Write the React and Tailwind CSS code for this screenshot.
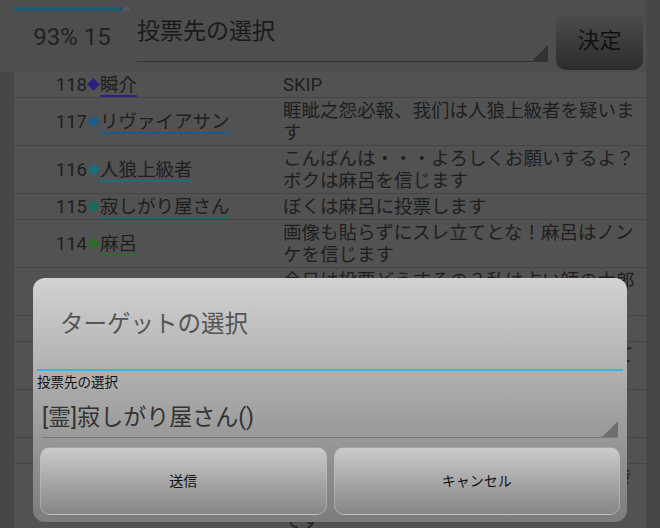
import React from 'react';

const rows = [
  { no: 118, name: '瞬介', color: '#2b1f80', msg: 'SKIP' },
  { no: 117, name: 'リヴァイアサン', color: '#1d5b8a', msg: '睚眦之怨必報、我们は人狼上級者を疑います' },
  { no: 116, name: '人狼上級者', color: '#1f6c7e', msg: 'こんばんは・・・よろしくお願いするよ？ボクは麻呂を信じます' },
  { no: 115, name: '寂しがり屋さん', color: '#19695d', msg: 'ぼくは麻呂に投票します' },
  { no: 114, name: '麻呂', color: '#2b6b2b', msg: '画像も貼らずにスレ立てとな！麻呂はノンケを信じます' },
  { no: 113, name: '占い太郎', color: '#3a6b1f', msg: '今日は投票どうするの？私は占い師の太郎を信じる' },
  { no: 112, name: '村人A', color: '#5b6b1f', msg: 'よろしくです' },
  { no: 111, name: '狂人さん', color: '#6b5b1f', msg: '霊能結果はどうなってるのかな？まだ出てない：まだです' },
  { no: 110, name: '騎士', color: '#6b3a1f', msg: '了解です\n様子見します' },
  { no: 109, name: '村人B', color: '#6b1f2b', msg: 'おはよう' },
  { no: 108, name: '共有者', color: '#6b1f5b', msg: 'みんな落ち着いて、まずは占い結果を聞きたい\nです' },
  { no: 107, name: '猫又', color: '#4b1f6b', msg: 'それで結局、誰に投票すればいいのかな？どう？' },
];

function Row({ no, name, color, msg }) {
  return (
    <div className="flex border-b border-[#454545] bg-[#525252]">
      <div className="flex w-[269px] shrink-0 items-center">
        <span className="w-[73px] text-right">{no}</span>
        <span className="flex w-[13px] justify-center">
          <span className="block h-[9px] w-[9px] rotate-45" style={{ backgroundColor: color }} />
        </span>
        <span
          className="underline decoration-2 underline-offset-[4px]"
          style={{ textDecorationColor: color }}
        >
          {name}
        </span>
      </div>
      <div className="flex-1 whitespace-pre-line pb-[1px] pr-[4px] pt-[2px]">{msg}</div>
    </div>
  );
}

function Corner({ className, fill }) {
  return (
    <svg className={className} width="16" height="16" viewBox="0 0 16 16">
      <polygon points="16,0 16,16 0,16" fill={fill} />
    </svg>
  );
}

export default function App() {
  return (
    <div className="relative flex h-[528px] w-[660px] overflow-hidden bg-[#4e4e4e] font-[Roboto,'Noto_Sans_CJK_JP',sans-serif] text-[#1e1e1e]">
      <div className="flex w-[646px] flex-col">
        {/* header */}
        <div className="flex h-[72px] shrink-0 pl-[14px]">
          <div className="w-[116px] pt-[7px]">
            <div className="h-[4px] bg-[#585858]">
              <div className="h-full w-[109px] bg-[#1e5a6d]" />
            </div>
            <div className="mt-[12px] text-center text-[24px] leading-[28px] text-[#222]">93% 15</div>
          </div>
          <div className="relative ml-[7px] h-[62px] w-[411px] border-b border-[#333]">
            <div className="pt-[18px] text-[23px] leading-[28px] text-[#1a1a1a]">投票先の選択</div>
            <Corner className="absolute bottom-0 right-0" fill="#333" />
          </div>
          <button className="ml-[8px] mt-[10px] flex h-[60px] w-[87px] items-center justify-center rounded-[10px] bg-gradient-to-b from-[#4f4f4f] to-[#2c2c2c] text-[22px] text-[#111]">
            決定
          </button>
        </div>

        {/* list */}
        <div className="flex-1 bg-[#474747] pl-[14px] text-[18.5px] leading-[22px]">
          {rows.map((r) => (
            <Row key={r.no} {...r} />
          ))}
        </div>
      </div>
      <div className="w-[14px] bg-[#474747]" />

      {/* dialog */}
      <div className="absolute left-[33px] top-[278px] flex h-[244px] w-[594px] flex-col rounded-[12px] bg-gradient-to-b from-[#d2d2d2] to-[#7c7c7c]">
        <div className="flex h-[91px] items-center pl-[27px] pt-[2px] text-[23.5px] text-[#555]">ターゲットの選択</div>
        <div className="mx-[4px] h-[2px] bg-[#33b5e5]" />
        <div className="mt-[3px] pl-[4px] text-[13.5px] leading-[17px] text-[#111]">投票先の選択</div>
        <div className="relative mx-[9px] mt-[12px] border-b border-[#7a7a7a] pb-[4px]">
          <div className="text-[23px] leading-[30px] text-[#333]">[霊]寂しがり屋さん()</div>
          <Corner className="absolute bottom-0 right-0" fill="#6f6f6f" />
        </div>
        <div className="mt-[9px] grid grid-cols-2 gap-[7px] px-[7px]">
          <button className="flex h-[68px] items-center justify-center rounded-[10px] border border-[#bdbdbd]/60 bg-gradient-to-b from-[#cbcbcb] to-[#868686] text-[14px] text-[#111]">
            送信
          </button>
          <button className="flex h-[68px] items-center justify-center rounded-[10px] border border-[#bdbdbd]/60 bg-gradient-to-b from-[#cbcbcb] to-[#868686] text-[14px] text-[#111]">
            キャンセル
          </button>
        </div>
      </div>
    </div>
  );
}
